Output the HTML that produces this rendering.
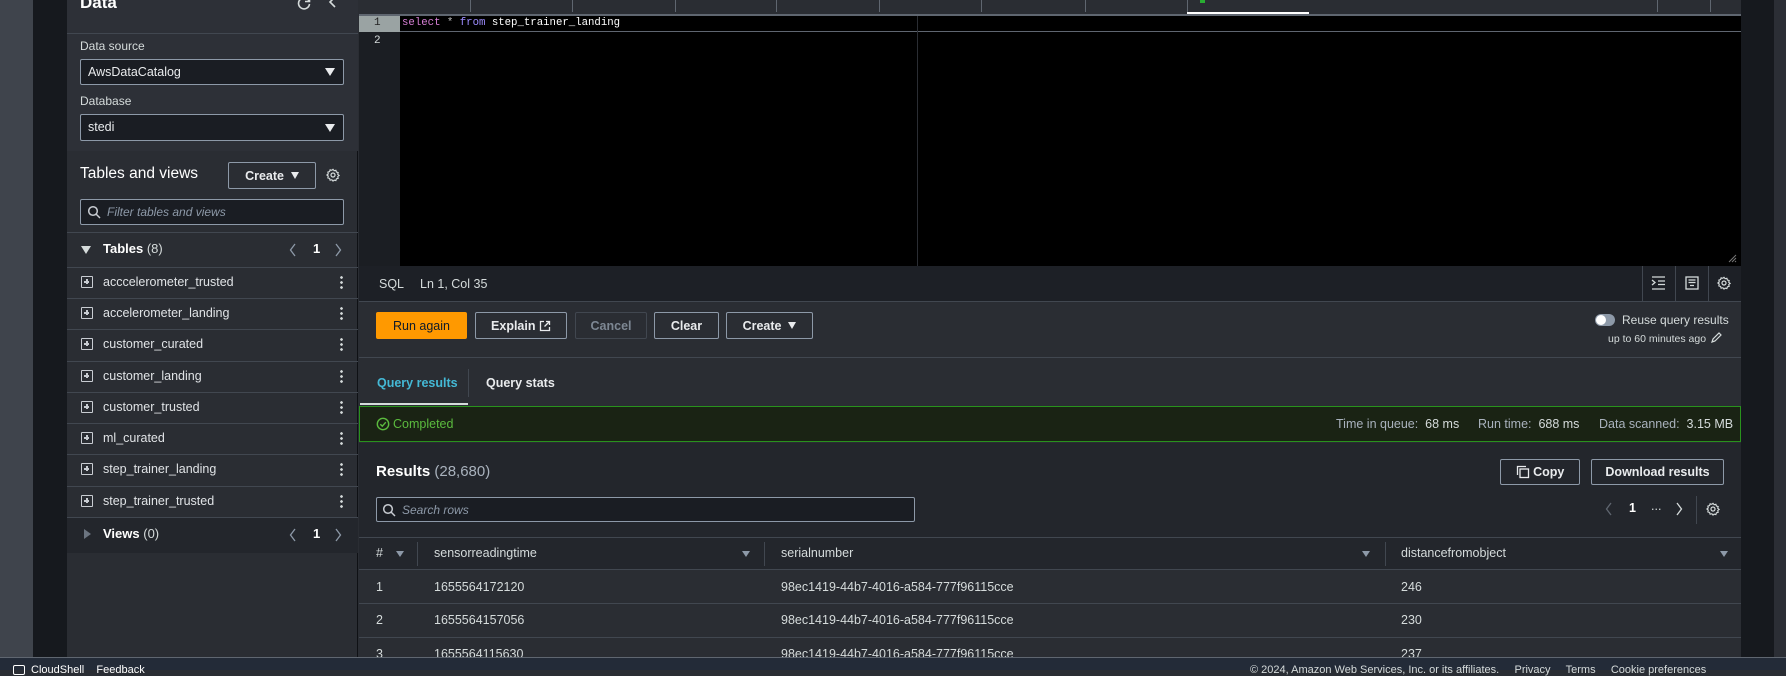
<!DOCTYPE html>
<html><head><meta charset="utf-8"><style>
*{box-sizing:border-box;margin:0;padding:0}
body{width:1786px;height:670px;overflow:hidden;background:#2a2d33;font-family:"Liberation Sans",sans-serif;font-size:12.5px;color:#d5dbdb;position:relative}
.a{position:absolute}
.hl{position:absolute;height:1px;background:#414750}
.vl{position:absolute;width:1px;background:#414750}
.btn{position:absolute;border:1px solid #8d99a8;border-radius:2px;color:#e9ebed;font-weight:bold;font-size:12.5px;display:flex;align-items:center;justify-content:center;background:transparent}
.inp{position:absolute;border:1px solid #8d99a8;border-radius:2px;background:#1a1d23}
.row{position:absolute;left:67px;width:291px;height:31px}
.row .ic{position:absolute;left:14px;top:9px;width:12px;height:12px;border:1.5px solid #c8ccd2;border-radius:1px}
.row .ic:before{content:"";position:absolute;left:2px;top:4px;width:5px;height:1.5px;background:#c8ccd2}
.row .ic:after{content:"";position:absolute;left:4px;top:2px;width:1.5px;height:5px;background:#c8ccd2}
.row .t{position:absolute;left:36px;top:8px;font-size:12.5px;color:#e0e3e6}
.row .d{position:absolute;left:273px;top:8px;width:3px;height:14px;background:radial-gradient(circle,#d5dbdb 1.2px,transparent 1.5px) 0 0/3px 5px repeat-y}
.mu{color:#a9b2bd}
.cell{position:absolute;font-size:12.5px;color:#d5dbdb}
.tri{display:inline-block;width:0;height:0;border-left:4.5px solid transparent;border-right:4.5px solid transparent;border-top:7px solid #e9ebed;vertical-align:middle}
.trib{position:absolute;width:0;height:0;border-left:5px solid transparent;border-right:5px solid transparent;border-top:8px solid #e9ebed}
.ftr{position:absolute;width:0;height:0;border-left:4px solid transparent;border-right:4px solid transparent;border-top:6px solid #8d99a8}
</style></head><body>
<div class="a" style="left:0;top:0;width:33px;height:658px;background:#3f444c"></div>
<div class="a" style="left:33px;top:0;width:34px;height:658px;background:#16191e"></div>
<div class="a" style="left:67px;top:0;width:291px;height:658px;background:#2a2d33;border-right:1px solid #0f1115"></div>
<div class="a" style="left:67px;top:0;width:291px;height:151px;background:#2d3037"></div>
<div class="a" style="left:80px;top:-7px;font-size:17px;font-weight:bold;color:#fff">Data</div>
<svg class="a" style="left:297px;top:-4px" width="14" height="14" viewBox="0 0 14 14"><path d="M12 5A5.5 5.5 0 1 0 12.5 8" stroke="#d5dbdb" stroke-width="1.6" fill="none"/><path d="M12.5 1v4.5H8" stroke="#d5dbdb" stroke-width="1.6" fill="none"/></svg>
<svg class="a" style="left:328px;top:-4px" width="10" height="14"><path d="M7 1L2 6l5 5" stroke="#d5dbdb" stroke-width="1.6" fill="none"/></svg>
<div class="hl" style="left:67px;top:33px;width:291px"></div>
<div class="a" style="left:80px;top:39px;font-size:12px">Data source</div>
<div class="inp" style="left:80px;top:59px;width:264px;height:26px"></div>
<div class="a" style="left:88px;top:65px;color:#e9ebed">AwsDataCatalog</div>
<div class="trib" style="left:325px;top:68px"></div>
<div class="a" style="left:80px;top:94px;font-size:12px">Database</div>
<div class="inp" style="left:80px;top:114px;width:264px;height:27px"></div>
<div class="a" style="left:88px;top:120px;color:#e9ebed">stedi</div>
<div class="trib" style="left:325px;top:124px"></div>
<div class="a" style="left:80px;top:165px;font-size:15.5px;color:#fff">Tables and views</div>
<div class="btn" style="left:228px;top:162px;width:88px;height:27px">Create&nbsp;&nbsp;<span class="tri"></span></div>
<svg class="a" style="left:326px;top:168px" width="14" height="14" viewBox="0 0 16 16"><circle cx="8" cy="8" r="2.3" stroke="#d5dbdb" stroke-width="1.4" fill="none"/><path d="M8 1.5l1.3 1.6 2-.5.6 2 2 .6-.5 2L15 8.5l-1.6 1.3.5 2-2 .6-.6 2-2-.5L8 15l-1.3-1.6-2 .5-.6-2-2-.6.5-2L1 8l1.6-1.3-.5-2 2-.6.6-2 2 .5z" stroke="#d5dbdb" stroke-width="1.3" fill="none"/></svg>
<div class="inp" style="left:80px;top:199px;width:264px;height:26px"></div>
<svg class="a" style="left:87px;top:205px" width="14" height="14"><circle cx="6" cy="6" r="4.3" stroke="#c8ccd2" stroke-width="1.5" fill="none"/><path d="M9 9l4 4" stroke="#c8ccd2" stroke-width="1.5"/></svg>
<div class="a" style="left:107px;top:205px;font-style:italic;color:#8d99a8;font-size:12px">Filter tables and views</div>
<div class="hl" style="left:67px;top:232px;width:291px"></div>
<div class="a" style="left:81px;top:246px;width:0;height:0;border-left:5px solid transparent;border-right:5px solid transparent;border-top:8px solid #d5dbdb"></div>
<div class="a" style="left:103px;top:241px;font-size:13px"><b style="color:#fff">Tables</b> (8)</div>
<svg class="a" style="left:289px;top:243px" width="8" height="14"><path d="M6 1L1.5 7 6 13" stroke="#8d99a8" stroke-width="1.3" fill="none"/></svg>
<div class="a" style="left:313px;top:241px;font-weight:bold;color:#fff;font-size:13px">1</div>
<svg class="a" style="left:334px;top:243px" width="8" height="14"><path d="M2 1l4.5 6L2 13" stroke="#8d99a8" stroke-width="1.3" fill="none"/></svg>
<div class="hl" style="left:67px;top:267px;width:291px"></div>
<div class="row" style="top:267px"><div class="ic"></div><div class="t">acccelerometer_trusted</div><div class="d"></div></div>
<div class="hl" style="left:67px;top:298px;width:291px"></div>
<div class="row" style="top:298px"><div class="ic"></div><div class="t">accelerometer_landing</div><div class="d"></div></div>
<div class="hl" style="left:67px;top:329px;width:291px"></div>
<div class="row" style="top:329px"><div class="ic"></div><div class="t">customer_curated</div><div class="d"></div></div>
<div class="hl" style="left:67px;top:361px;width:291px"></div>
<div class="row" style="top:361px"><div class="ic"></div><div class="t">customer_landing</div><div class="d"></div></div>
<div class="hl" style="left:67px;top:392px;width:291px"></div>
<div class="row" style="top:392px"><div class="ic"></div><div class="t">customer_trusted</div><div class="d"></div></div>
<div class="hl" style="left:67px;top:423px;width:291px"></div>
<div class="row" style="top:423px"><div class="ic"></div><div class="t">ml_curated</div><div class="d"></div></div>
<div class="hl" style="left:67px;top:454px;width:291px"></div>
<div class="row" style="top:454px"><div class="ic"></div><div class="t">step_trainer_landing</div><div class="d"></div></div>
<div class="hl" style="left:67px;top:486px;width:291px"></div>
<div class="row" style="top:486px"><div class="ic"></div><div class="t">step_trainer_trusted</div><div class="d"></div></div>
<div class="hl" style="left:67px;top:517px;width:291px"></div>
<div class="a" style="left:67px;top:518px;width:291px;height:35px;background:#23262c"></div>
<div class="a" style="left:84px;top:529px;width:0;height:0;border-top:5px solid transparent;border-bottom:5px solid transparent;border-left:7px solid #6b7480"></div>
<div class="a" style="left:103px;top:526px;font-size:13px"><b style="color:#fff">Views</b> (0)</div>
<svg class="a" style="left:289px;top:528px" width="8" height="14"><path d="M6 1L1.5 7 6 13" stroke="#8d99a8" stroke-width="1.3" fill="none"/></svg>
<div class="a" style="left:313px;top:526px;font-weight:bold;color:#fff;font-size:13px">1</div>
<svg class="a" style="left:334px;top:528px" width="8" height="14"><path d="M2 1l4.5 6L2 13" stroke="#8d99a8" stroke-width="1.3" fill="none"/></svg>

<div class="a" style="left:359px;top:0;width:1382px;height:14px;background:#2a2d33"></div>
<div class="a" style="left:359px;top:14px;width:1382px;height:2px;background:#5f6670"></div>
<div class="vl" style="left:470px;top:0;height:12px;background:#5f6670"></div>
<div class="vl" style="left:572px;top:0;height:12px;background:#5f6670"></div>
<div class="vl" style="left:675px;top:0;height:12px;background:#5f6670"></div>
<div class="vl" style="left:776px;top:0;height:12px;background:#5f6670"></div>
<div class="vl" style="left:879px;top:0;height:12px;background:#5f6670"></div>
<div class="vl" style="left:981px;top:0;height:12px;background:#5f6670"></div>
<div class="vl" style="left:1085px;top:0;height:12px;background:#5f6670"></div>
<div class="vl" style="left:1187px;top:0;height:12px;background:#5f6670"></div>
<div class="vl" style="left:1657px;top:0;height:12px;background:#5f6670"></div>
<div class="vl" style="left:1710px;top:0;height:12px;background:#5f6670"></div>
<div class="a" style="left:1187px;top:12px;width:122px;height:2px;background:#fff"></div>
<div class="a" style="left:1200px;top:0;width:5px;height:3px;background:#29ad32"></div>
<div class="a" style="left:359px;top:16px;width:41px;height:250px;background:#1b1e23"></div>
<div class="a" style="left:400px;top:16px;width:1341px;height:250px;background:#000"></div>
<div class="a" style="left:359px;top:16px;width:41px;height:16px;background:#9aa3a3"></div>
<div class="a" style="left:400px;top:31px;width:1341px;height:1px;background:#5f6670"></div>
<div class="vl" style="left:917px;top:16px;height:250px;background:#2a2d33"></div>
<div class="a" style="left:374px;top:17px;font-family:'Liberation Mono',monospace;font-size:11px;color:#222">1</div>
<div class="a" style="left:374px;top:35px;font-family:'Liberation Mono',monospace;font-size:11px;color:#d5dbdb">2</div>
<div class="a" style="left:402px;top:17px;font-family:'Liberation Mono',monospace;font-size:10.7px;color:#fff;white-space:pre"><span style="color:#d77fd6">select</span> <span style="color:#bbb">*</span> <span style="color:#9d8cff">from</span> step_trainer_landing</div>
<svg class="a" style="left:1728px;top:254px" width="9" height="9"><path d="M1 8L8 1M4 8l4-4M7 8l1-1" stroke="#777" stroke-width="1"/></svg>
<div class="a" style="left:359px;top:266px;width:1382px;height:35px;background:#1d2026"></div>
<div class="a" style="left:379px;top:277px;font-size:12.5px">SQL</div>
<div class="a" style="left:420px;top:277px;font-size:12.5px">Ln 1, Col 35</div>
<div class="vl" style="left:1642px;top:266px;height:35px"></div>
<div class="vl" style="left:1675px;top:266px;height:35px"></div>
<div class="vl" style="left:1708px;top:266px;height:35px"></div>
<svg class="a" style="left:1651px;top:276px" width="15" height="14"><path d="M1 1h13M7 5h7M7 8.5h7M1 13h13M1 4l3 2.5L1 9" stroke="#d5dbdb" stroke-width="1.3" fill="none"/></svg>
<svg class="a" style="left:1685px;top:276px" width="14" height="14"><rect x="1" y="1" width="12" height="12" stroke="#d5dbdb" stroke-width="1.3" fill="none"/><path d="M3.5 4h7M3.5 6.5h7M5 9.5h4" stroke="#d5dbdb" stroke-width="1.2"/></svg>
<svg class="a" style="left:1717px;top:276px" width="14" height="14" viewBox="0 0 16 16"><circle cx="8" cy="8" r="2.3" stroke="#d5dbdb" stroke-width="1.4" fill="none"/><path d="M8 1.5l1.3 1.6 2-.5.6 2 2 .6-.5 2L15 8.5l-1.6 1.3.5 2-2 .6-.6 2-2-.5L8 15l-1.3-1.6-2 .5-.6-2-2-.6.5-2L1 8l1.6-1.3-.5-2 2-.6.6-2 2 .5z" stroke="#d5dbdb" stroke-width="1.3" fill="none"/></svg>
<div class="hl" style="left:359px;top:301px;width:1382px"></div>
<div class="btn" style="left:376px;top:312px;width:91px;height:27px;background:#ff9900;border-color:#ff9900;color:#0f1b2a;font-weight:normal">Run again</div>
<div class="btn" style="left:475px;top:312px;width:92px;height:27px">Explain&nbsp;<svg width="12" height="12"><path d="M5 1.5H1.5v9h9V7M7 1.5h3.5V5M10.5 1.5L5.5 6.5" stroke="#e9ebed" stroke-width="1.3" fill="none"/></svg></div>
<div class="btn" style="left:575px;top:312px;width:72px;height:27px;border-color:#414750;color:#7d8793">Cancel</div>
<div class="btn" style="left:654px;top:312px;width:65px;height:27px">Clear</div>
<div class="btn" style="left:726px;top:312px;width:87px;height:27px">Create&nbsp;&nbsp;<span class="tri"></span></div>
<div class="a" style="left:1595px;top:314px;width:20px;height:12px;border-radius:6px;background:#8d99a8"></div>
<div class="a" style="left:1596px;top:315px;width:10px;height:10px;border-radius:5px;background:#fff"></div>
<div class="a" style="left:1622px;top:313px;font-size:12px">Reuse query results</div>
<div class="a" style="left:1608px;top:333px;font-size:10.5px">up to 60 minutes ago</div>
<svg class="a" style="left:1710px;top:332px" width="12" height="12"><path d="M2 10l1-3 6-6 2 2-6 6z" stroke="#d5dbdb" stroke-width="1.2" fill="none"/></svg>
<div class="hl" style="left:359px;top:357px;width:1382px"></div>
<div class="a" style="left:377px;top:376px;font-weight:bold;color:#44b9d6;font-size:12.5px">Query results</div>
<div class="vl" style="left:468px;top:369px;height:28px"></div>
<div class="a" style="left:486px;top:376px;font-weight:bold;color:#e9ebed;font-size:12.5px">Query stats</div>
<div class="a" style="left:360px;top:403px;width:108px;height:2px;background:#d5dbdb"></div>
<div class="a" style="left:359px;top:406px;width:1382px;height:36px;background:#1a2314;border:1px solid #29921d"></div>
<svg class="a" style="left:376px;top:417px" width="14" height="14"><circle cx="7" cy="7" r="5.7" stroke="#5bbb3e" stroke-width="1.4" fill="none"/><path d="M4.3 7.2l2 2 3.5-4" stroke="#5bbb3e" stroke-width="1.4" fill="none"/></svg>
<div class="a" style="left:393px;top:417px;color:#5bbb3e;font-size:12.5px">Completed</div>
<div class="a" style="left:1336px;top:417px;font-size:12.5px;white-space:nowrap"><span class="mu">Time in queue:</span>&nbsp; 68 ms</div>
<div class="a" style="left:1478px;top:417px;font-size:12.5px;white-space:nowrap"><span class="mu">Run time:</span>&nbsp; 688 ms</div>
<div class="a" style="left:1599px;top:417px;font-size:12.5px;white-space:nowrap"><span class="mu">Data scanned:</span>&nbsp; 3.15 MB</div>
<div class="a" style="left:359px;top:443px;width:1382px;height:94px;background:#23262c"></div>
<div class="a" style="left:376px;top:463px;font-size:15px"><b style="color:#fff">Results</b> <span class="mu">(28,680)</span></div>
<div class="btn" style="left:1500px;top:459px;width:80px;height:26px"><svg width="14" height="14"><path d="M1.5 10V1.5H10" stroke="#e9ebed" stroke-width="1.3" fill="none"/><rect x="4" y="4" width="8.5" height="8.5" stroke="#e9ebed" stroke-width="1.3" fill="none"/></svg>&nbsp;Copy</div>
<div class="btn" style="left:1591px;top:459px;width:133px;height:26px">Download results</div>
<div class="inp" style="left:376px;top:497px;width:539px;height:25px"></div>
<svg class="a" style="left:382px;top:503px" width="14" height="14"><circle cx="6" cy="6" r="4.3" stroke="#c8ccd2" stroke-width="1.5" fill="none"/><path d="M9 9l4 4" stroke="#c8ccd2" stroke-width="1.5"/></svg>
<div class="a" style="left:402px;top:503px;font-style:italic;color:#8d99a8;font-size:12px">Search rows</div>
<svg class="a" style="left:1605px;top:502px" width="8" height="14"><path d="M6 1L1.5 7 6 13" stroke="#5f6670" stroke-width="1.3" fill="none"/></svg>
<div class="a" style="left:1629px;top:501px;font-weight:bold;color:#fff">1</div>
<div class="a" style="left:1651px;top:499px;color:#d5dbdb">...</div>
<svg class="a" style="left:1675px;top:502px" width="8" height="14"><path d="M2 1l4.5 6L2 13" stroke="#d5dbdb" stroke-width="1.3" fill="none"/></svg>
<div class="vl" style="left:1696px;top:496px;height:28px"></div>
<svg class="a" style="left:1706px;top:502px" width="14" height="14" viewBox="0 0 16 16"><circle cx="8" cy="8" r="2.3" stroke="#d5dbdb" stroke-width="1.4" fill="none"/><path d="M8 1.5l1.3 1.6 2-.5.6 2 2 .6-.5 2L15 8.5l-1.6 1.3.5 2-2 .6-.6 2-2-.5L8 15l-1.3-1.6-2 .5-.6-2-2-.6.5-2L1 8l1.6-1.3-.5-2 2-.6.6-2 2 .5z" stroke="#d5dbdb" stroke-width="1.3" fill="none"/></svg>
<div class="hl" style="left:359px;top:537px;width:1382px"></div>
<div class="a" style="left:359px;top:538px;width:1382px;height:31px;background:#23262c"></div>
<div class="cell mu" style="left:376px;top:546px">#</div>
<div class="ftr" style="left:396px;top:551px"></div>
<div class="vl" style="left:417px;top:542px;height:24px"></div>
<div class="cell mu" style="left:434px;top:546px">sensorreadingtime</div>
<div class="ftr" style="left:742px;top:551px"></div>
<div class="vl" style="left:764px;top:542px;height:24px"></div>
<div class="cell mu" style="left:781px;top:546px">serialnumber</div>
<div class="ftr" style="left:1362px;top:551px"></div>
<div class="vl" style="left:1385px;top:542px;height:24px"></div>
<div class="cell mu" style="left:1401px;top:546px">distancefromobject</div>
<div class="ftr" style="left:1720px;top:551px"></div>
<div class="hl" style="left:359px;top:569px;width:1382px"></div>
<div class="a" style="left:359px;top:570px;width:1382px;height:88px;background:#2a2d33"></div>
<div class="cell" style="left:376px;top:580px">1</div><div class="cell" style="left:434px;top:580px">1655564172120</div><div class="cell" style="left:781px;top:580px">98ec1419-44b7-4016-a584-777f96115cce</div><div class="cell" style="left:1401px;top:580px">246</div>
<div class="hl" style="left:359px;top:603px;width:1382px"></div>
<div class="cell" style="left:376px;top:613px">2</div><div class="cell" style="left:434px;top:613px">1655564157056</div><div class="cell" style="left:781px;top:613px">98ec1419-44b7-4016-a584-777f96115cce</div><div class="cell" style="left:1401px;top:613px">230</div>
<div class="hl" style="left:359px;top:637px;width:1382px"></div>
<div class="cell" style="left:376px;top:647px">3</div><div class="cell" style="left:434px;top:647px">1655564115630</div><div class="cell" style="left:781px;top:647px">98ec1419-44b7-4016-a584-777f96115cce</div><div class="cell" style="left:1401px;top:647px">237</div>
<div class="a" style="left:1741px;top:0;width:33px;height:658px;background:#16191e"></div>
<div class="a" style="left:1774px;top:0;width:12px;height:658px;background:#2b2e35"></div>
<div class="a" style="left:0;top:657px;width:1786px;height:13px;background:#232b38;border-top:1px solid #5f6670"></div>
<div class="a" style="left:13px;top:665px;width:12px;height:10px;border:1.5px solid #fff;border-radius:2px"></div>
<div class="a" style="left:31px;top:664px;font-size:11px;color:#fff;white-space:nowrap">CloudShell&nbsp;&nbsp;&nbsp; Feedback</div>
<div class="a" style="left:1250px;top:664px;font-size:11px;color:#d5dbdb;white-space:nowrap">© 2024, Amazon Web Services, Inc. or its affiliates.&nbsp;&nbsp;&nbsp;&nbsp; Privacy&nbsp;&nbsp;&nbsp;&nbsp; Terms&nbsp;&nbsp;&nbsp;&nbsp; Cookie preferences</div>
</body></html>
